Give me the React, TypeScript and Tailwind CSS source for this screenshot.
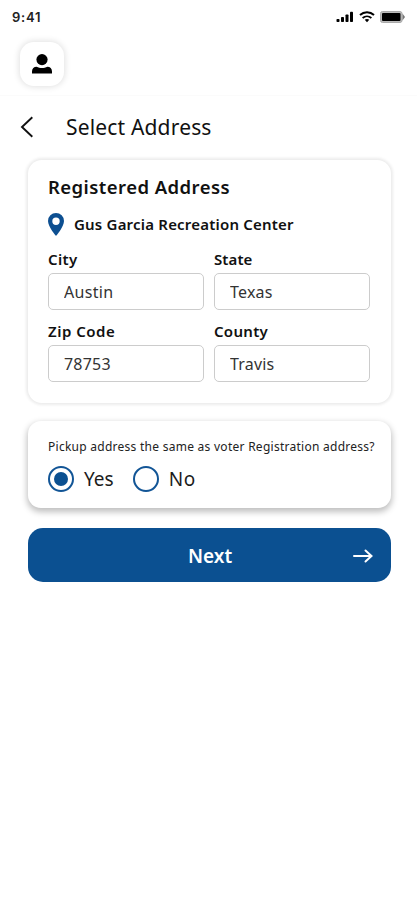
import { useState } from 'react';

interface AddressField {
  label: string;
  value: string;
  labelClass: string;
  valueClass: string;
}

const fields: AddressField[] = [
  { label: 'City', value: 'Austin', labelClass: 'tracking-[0.4px]', valueClass: 'tracking-[0.3px]' },
  { label: 'State', value: 'Texas', labelClass: 'tracking-[0.1px]', valueClass: 'tracking-[0.2px]' },
  { label: 'Zip Code', value: '78753', labelClass: 'tracking-[0.5px]', valueClass: 'tracking-[0.2px]' },
  { label: 'County', value: 'Travis', labelClass: 'tracking-[0.3px]', valueClass: 'tracking-[0.2px]' },
];

function StatusBar() {
  return (
    <div className="flex h-8 items-center justify-between pt-0.5 pr-3 pl-3">
      <span className="font-['Inter',sans-serif] text-[13px] leading-4 font-semibold tracking-[0.8px] text-[#222]">9:41</span>
      <div className="flex items-center gap-[5px] text-black">
        <svg width="18" height="12" viewBox="0 0 18 12" fill="currentColor" aria-hidden="true">
          <rect x="0.5" y="8" width="3" height="3" rx="0.8" />
          <rect x="5" y="6" width="3" height="5" rx="0.8" />
          <rect x="9.5" y="3.5" width="3" height="7.5" rx="0.8" />
          <rect x="14" y="0.8" width="3" height="10.2" rx="0.8" />
        </svg>
        <svg width="16" height="12" viewBox="0 0 16 12" fill="none" stroke="currentColor" aria-hidden="true">
          <path d="M1 4.1C5 .4 11 .4 15 4.1" strokeWidth="2" />
          <path d="M3.6 7C6.2 4.7 9.8 4.7 12.4 7" strokeWidth="1.8" />
          <path d="M5.7 8.8c1.4-1.1 3.2-1.1 4.6 0L8 11.2z" fill="currentColor" stroke="none" />
        </svg>
        <svg width="25" height="12" viewBox="0 0 25 12" aria-hidden="true">
          <rect x="0.5" y="0.5" width="21.5" height="11" rx="2" fill="#bbb" stroke="#aaa" />
          <rect x="2" y="2" width="18.5" height="8" rx="1" fill="#000" />
          <path d="M22.5 2.5 25 6l-2.5 3.5z" fill="#777" />
        </svg>
      </div>
    </div>
  );
}

function Radio({ label, checked, onSelect, className }: {
  label: string;
  checked: boolean;
  onSelect: () => void;
  className: string;
}) {
  return (
    <button type="button" role="radio" aria-checked={checked} onClick={onSelect} className="flex items-center gap-2.5">
      <span className="flex size-[26px] items-center justify-center rounded-full border-2 border-[#125596]">
        {checked ? <span className="size-3.5 rounded-full bg-[#0b5091]" /> : null}
      </span>
      <span className={`text-[19px] leading-6 text-[#1c1c1c] ${className}`}>{label}</span>
    </button>
  );
}

export default function App() {
  const [sameAddress, setSameAddress] = useState(true);

  return (
    <main className="h-[900px] w-[417px] overflow-hidden bg-white font-['Noto_Sans',sans-serif] text-[#111]">
      <header className="h-24 border-b border-[#fbfbfb]">
        <StatusBar />
        <button
          type="button"
          aria-label="Profile"
          className="mt-2.5 ml-5 flex size-11 items-center justify-center rounded-[14px] bg-white shadow-[0_0_6px_1px_rgba(0,0,0,0.12)]"
        >
          <svg width="20" height="20" viewBox="0 0 20 20" fill="#000" aria-hidden="true">
            <circle cx="10" cy="5.6" r="5.6" />
            <path d="M0 19.6v-2.2c0-2.7 1.9-4.7 4.6-4.7 1.7.9 3.5 1.2 5.4 1.2s3.700-.3 5.400-1.200c2.700 0 4.600 2 4.600 4.700v2.200z" />
          </svg>
        </button>
      </header>

      <div className="flex h-16 items-center pb-[3px] pl-5">
        <svg width="14" height="22" viewBox="0 0 14 22" fill="none" stroke="#111" strokeWidth="1.9" aria-hidden="true">
          <path d="M12.3 1.3 2 11l10.3 9.7" />
        </svg>
        <h1 className="ml-8 text-[21px] leading-7 tracking-[0.17px] whitespace-nowrap">Select Address</h1>
      </div>

      <section className="mr-[26px] ml-7 h-[243px] rounded-[14px] bg-white px-5 pt-3.5 shadow-[0_0_3px_2px_rgba(0,0,0,0.08)]">
        <h2 className="text-[18.5px] leading-[26px] font-semibold tracking-[0.44px] whitespace-nowrap">Registered Address</h2>
        <div className="mt-2.5 flex h-7 items-center">
          <svg width="16" height="23" viewBox="0 0 16 23" fill="#0d4f91" aria-hidden="true">
            <path fillRule="evenodd" d="M8 0a8 8 0 0 1 8 8c0 5.8-8 15-8 15S0 13.8 0 8a8 8 0 0 1 8-8Zm0 4.5a3.700 3.700 0 1 0 0 7.400A3.700 3.700 0 0 0 8 4.5Z" />
          </svg>
          <span className="ml-2.5 text-[15px] leading-5 font-semibold tracking-[0.2px] whitespace-nowrap">Gus Garcia Recreation Center</span>
        </div>
        <div className="mt-[11px] grid grid-cols-[156px_156px] gap-x-2.5 gap-y-[11px]">
          {fields.map((field) => (
            <label key={field.label} className="block">
              <span className={`block text-[15px] leading-5 font-semibold ${field.labelClass}`}>{field.label}</span>
              <input
                readOnly
                value={field.value}
                className={`mt-1 block h-[37px] w-full rounded-[5px] border border-[#ccc] bg-white pl-[15px] text-base text-[#333] outline-none ${field.valueClass}`}
              />
            </label>
          ))}
        </div>
      </section>

      <section className="mt-[18px] mr-[26px] ml-7 h-[87px] rounded-[13px] bg-white pt-[17px] pl-5 shadow-[0_3px_6px_1px_rgba(0,0,0,0.25)]">
        <p className="text-[12px] leading-[18px] tracking-[0.265px] whitespace-nowrap text-[#222]">
          Pickup address the same as voter Registration address?
        </p>
        <div className="mt-2.5 flex gap-[19px]" role="radiogroup">
          <Radio label="Yes" checked={sameAddress} onSelect={() => setSameAddress(true)} className="" />
          <Radio label="No" checked={!sameAddress} onSelect={() => setSameAddress(false)} className="tracking-[0.6px]" />
        </div>
      </section>

      <button
        type="button"
        className="mt-5 mr-[26px] ml-7 flex h-[54px] w-[363px] items-center justify-between rounded-[15px] bg-[#0b5091] pt-0.5 pr-[18px] pl-[160px] text-white"
      >
        <span className="text-[19px] leading-6 font-semibold">Next</span>
        <svg width="20" height="16" viewBox="0 0 20 16" fill="none" stroke="currentColor" strokeWidth="2" aria-hidden="true">
          <path d="M1 8h17M12.5 2.5 18.5 8l-6 5.5" strokeLinecap="round" />
        </svg>
      </button>
    </main>
  );
}
